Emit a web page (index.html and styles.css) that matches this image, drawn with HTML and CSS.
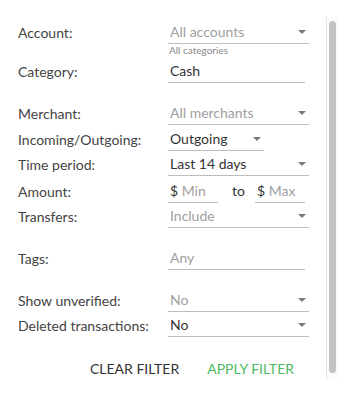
FILE: index.html
```html
<!DOCTYPE html>
<html lang="en">
<head>
  <meta charset="UTF-8" />
  <meta name="viewport" content="width=device-width, initial-scale=1.0"/>
  <title>Filter transactions</title>
  <link rel="stylesheet" href="styles.css">
</head>
<body>
  <div class="panel">
    <div class="form">
      <div class="row first">
        <label class="label">Account:</label>
        <div class="field placeholder"><span>All accounts</span><span class="caret"></span></div>
      </div>
      <div class="row tight">
        <label class="label">Category:</label>
        <div class="stack">
          <span class="helper">All categories</span>
          <div class="field short">Cash</div>
        </div>
      </div>
      <div class="row gap-lg">
        <label class="label">Merchant:</label>
        <div class="field placeholder"><span>All merchants</span><span class="caret"></span></div>
      </div>
      <div class="row">
        <label class="label">Incoming/Outgoing:</label>
        <div class="field narrow"><span>Outgoing</span><span class="caret"></span></div>
      </div>
      <div class="row gap-s">
        <label class="label">Time period:</label>
        <div class="field"><span>Last 14 days</span><span class="caret"></span></div>
      </div>
      <div class="row gap-m">
        <label class="label">Amount:</label>
        <div class="amount">
          <div class="field money"><span>$ <span class="hint">Min</span></span></div>
          <span class="to">to</span>
          <div class="field money"><span>$ <span class="hint">Max</span></span></div>
        </div>
      </div>
      <div class="row gap-s">
        <label class="label">Transfers:</label>
        <div class="field placeholder"><span>Include</span><span class="caret"></span></div>
      </div>
      <div class="row gap-lg">
        <label class="label">Tags:</label>
        <div class="field short placeholder">Any</div>
      </div>
      <div class="row gap-lg">
        <label class="label">Show unverified:</label>
        <div class="field placeholder"><span>No</span><span class="caret"></span></div>
      </div>
      <div class="row gap-s">
        <label class="label">Deleted transactions:</label>
        <div class="field"><span>No</span><span class="caret"></span></div>
      </div>
      <div class="actions">
        <button class="btn">Clear filter</button>
        <button class="btn apply">Apply filter</button>
      </div>
    </div>
    <div class="scrollbar">
      <div class="thumb"></div>
    </div>
  </div>
</body>
</html>
```

FILE: styles.css
```css
body {
  margin: 0;
  background: #fff;
  font-family: Lato, "Open Sans", sans-serif;
  color: #444;
}
.panel {
  display: flex;
  height: 400px;
}
.form {
  width: 308px;
  padding: 21px 0 0 18px;
}
.row {
  display: grid;
  grid-template-columns: 150px 141px;
  align-items: end;
  margin-top: 3px;
}
.row.first, .row.tight { margin-top: 0; }
.row.gap-s { margin-top: 2px; }
.row.gap-m { margin-top: 4px; }
.row.gap-lg { margin-top: 19px; }
.label {
  font-size: 14px;
  line-height: 22px;
  color: #444;
}
.stack {
  display: flex;
  flex-direction: column;
}
.helper {
  font-size: 10px;
  line-height: 12px;
  margin-bottom: 4px;
  color: #8a8a8a;
  padding-left: 1px;
}
.field {
  height: 22px;
  line-height: 22px;
  border-bottom: 1px solid #bdbdbd;
  padding: 0 3px 0 2px;
  display: flex;
  justify-content: space-between;
  align-items: center;
  font-size: 14px;
  color: #333;
  white-space: nowrap;
}
.field.short { width: 132px; }
.field.narrow { width: 91px; }
.placeholder, .hint { color: #a0a0a0; }
.caret {
  width: 0;
  height: 0;
  border-left: 4px solid transparent;
  border-right: 4px solid transparent;
  border-top: 4px solid #7a7a7a;
}
.amount {
  display: flex;
  align-items: flex-end;
}
.field.money { width: 45px; }
.to {
  font-size: 14px;
  line-height: 22px;
  color: #333;
  margin: 0 10px 1px 14px;
}
.actions {
  display: flex;
  justify-content: flex-end;
  gap: 12px;
  margin-top: 13px;
  padding-right: 24px;
}
.btn {
  background: none;
  border: none;
  padding: 0 8px;
  height: 36px;
  font-family: Lato, "Open Sans", sans-serif;
  font-size: 14px;
  text-transform: uppercase;
  color: #333;
  cursor: pointer;
}
.btn.apply { color: #4cba63; }
.scrollbar {
  width: 11px;
  margin-top: 17px;
  height: 363px;
  border-left: 1px solid #e6e6e6;
  background: #fbfbfb;
}
.thumb {
  width: 7px;
  height: 352px;
  margin: 4px 0 0 2px;
  border-radius: 4px;
  background: #c2c2c2;
}
```
